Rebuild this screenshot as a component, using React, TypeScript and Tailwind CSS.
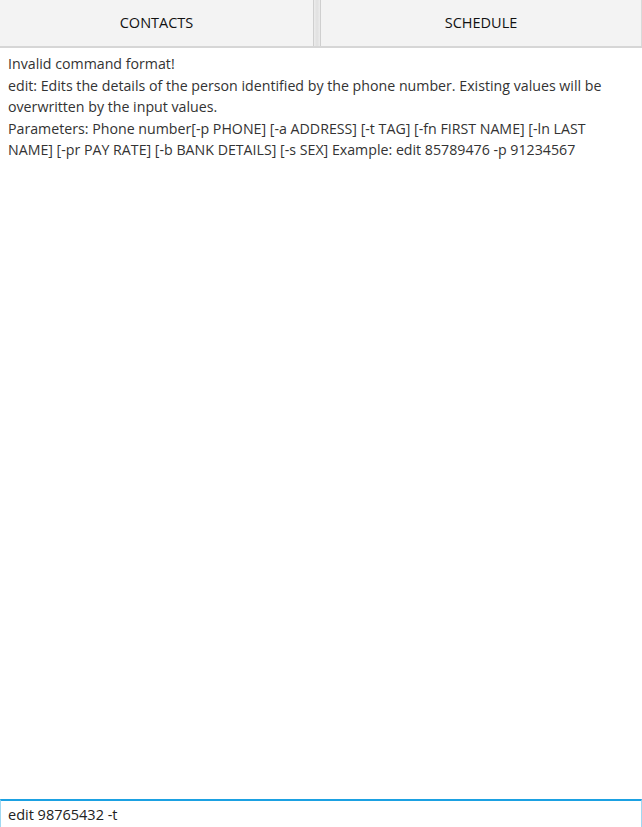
export default function App() {
  return (
    <main
      className="flex h-[827px] w-full flex-col bg-white text-[#222]"
      style={{ fontFamily: '"Open Sans", "Noto Sans", sans-serif' }}
    >
      {/* Tabs */}
      <header className="flex h-[48px] shrink-0 border-b-2 border-[#d6d6d6] bg-[#f3f3f3]">
        <button className="flex w-[313px] shrink-0 items-center justify-center text-[14.5px] text-[#111]">
          CONTACTS
        </button>
        <div className="flex w-[8px] shrink-0">
          <div className="w-px bg-[#cfcfcf]" />
          <div className="flex-1 bg-gradient-to-r from-[#ececec] via-[#e0e0e0] to-[#ececec]" />
          <div className="w-px bg-[#cfcfcf]" />
        </div>
        <button className="flex flex-1 items-center justify-center border-r border-[#d9d9d9] text-[14.5px] text-[#111]">
          SCHEDULE
        </button>
      </header>

      {/* Result output */}
      <section className="flex-1 px-[8px] pt-[5px] text-[14.2px] leading-[21.5px] text-[#333]">
        <p>Invalid command format!</p>
        <p>
          edit: Edits the details of the person identified by the phone number. Existing values will be
          overwritten by the input values.
        </p>
        <p>
          Parameters: Phone number[-p PHONE] [-a ADDRESS] [-t TAG] [-fn FIRST NAME] [-ln LAST
          NAME] [-pr PAY RATE] [-b BANK DETAILS] [-s SEX] Example: edit 85789476 -p 91234567
        </p>
      </section>

      {/* Command box */}
      <div className="h-[28px] shrink-0 border-x border-t-2 border-[#1ba1e2] border-x-[#9fd8f2] bg-white">
        <input
          className="h-full w-full px-[7px] text-[14.5px] text-[#222] outline-none"
          defaultValue="edit 98765432 -t"
        />
      </div>
    </main>
  );
}
